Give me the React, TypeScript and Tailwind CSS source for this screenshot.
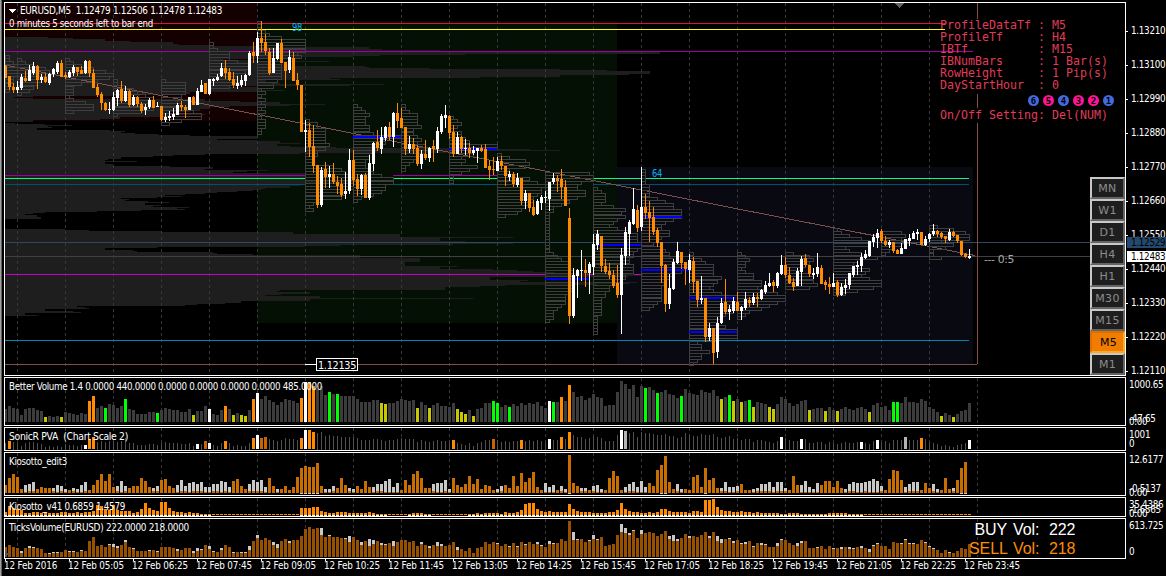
import { ReactNode } from 'react';
import clsx from 'clsx';

const ORANGE = '#ff8c00';
const WHITE = '#ffffff';
const GREEN = '#00ff00';
const YELLOW = '#c8c800';
const FONT = "'DejaVu Sans Condensed', 'DejaVu Sans', sans-serif";

const nums = (s: string) => s.trim().split(/[\s,]+/).map(Number);
const barX = (i: number) => 5 + i * 4;

// open high low close, four numbers for each bar, in chart pixels
const CANDLES = nums(`
66 65 78 78, 76 76 90 87, 87 83 93 90, 90 81 93 87, 88 74 90 77, 78 71 82 81, 81 65 81 70, 73 62 75 66,
66 65 89 80, 80 74 83 77, 77 73 83 82, 83 73 85 74, 74 68 77 69, 72 61 74 63, 63 60 77 77, 75 72 79 77,
77 70 78 72, 73 65 76 67, 67 67 76 72, 70 66 74 74, 73 60 74 61, 61 60 77 73, 73 69 88 88, 87 84 97 95,
94 92 110 103, 103 102 111 110, 110 102 114 109, 110 92 111 97, 98 89 106 90, 89 81 103 101, 101 86 102 91, 91 90 107 105,
105 95 106 97, 97 96 107 104, 104 102 113 111, 110 104 115 107, 107 98 109 100, 100 96 108 108, 107 102 107 106, 106 106 121 120,
120 113 122 117, 118 111 121 116, 117 108 120 114, 115 103 115 105, 105 101 111 107, 107 105 118 110, 110 97 110 97, 97 96 105 105,
105 88 105 91, 92 80 92 85, 83 83 94 94, 94 79 95 79, 81 78 86 79, 80 74 81 77, 76 63 77 68, 68 60 79 73,
72 68 81 80, 79 72 88 85, 86 76 89 83, 85 75 87 80, 81 74 86 75, 75 51 76 53, 52 42 63 56, 56 32 63 38,
38 21 52 43, 42 34 55 51, 52 48 75 73, 73 48 73 58, 59 43 60 43, 43 39 63 63, 62 62 88 71, 70 50 73 57,
58 52 81 81, 80 73 90 85, 85 85 132 132, 132 120 152 130, 130 123 157 147, 146 125 173 166, 165 165 208 205, 205 167 207 170,
169 162 188 177, 177 166 188 174, 174 163 184 182, 182 176 194 186, 184 178 197 195, 194 172 199 191, 191 149 194 160, 160 150 186 180,
179 174 196 189, 189 174 195 175, 175 173 198 198, 198 155 200 163, 164 142 171 143, 142 130 151 148, 149 127 154 137, 138 126 141 127,
127 122 140 137, 137 112 147 113, 113 103 128 121, 118 108 128 128, 127 127 155 149, 149 136 153 144, 144 138 154 149, 148 145 166 164,
164 150 169 154, 154 140 160 158, 158 147 162 148, 146 140 162 149, 149 127 153 131, 132 114 134 116, 118 105 128 115, 116 115 139 133,
132 125 157 154, 154 132 154 137, 137 136 153 149, 149 139 155 148, 148 143 158 153, 153 146 155 150, 151 148 163 148, 148 145 152 151,
149 144 168 168, 166 160 180 170, 169 157 175 170, 171 157 171 161, 161 156 170 166, 166 166 186 176, 177 171 181 174, 174 172 187 184,
185 173 187 178, 178 178 205 201, 201 190 209 193, 193 193 212 208, 207 200 216 215, 214 199 215 201, 203 195 210 197, 198 191 203 197,
199 182 211 182, 182 173 184 178, 178 175 192 181, 179 169 199 187, 187 180 206 206, 218 208 324 316, 316 268 318 275, 276 269 298 270,
271 250 281 270, 270 259 287 273, 273 262 294 264, 267 234 275 244, 245 230 250 234, 236 236 272 266, 266 259 274 272, 271 263 279 275,
275 270 288 286, 283 265 298 295, 295 248 334 255, 256 227 265 232, 234 220 256 222, 224 188 225 209, 210 205 232 228, 227 167 231 207,
207 194 219 213, 212 201 242 218, 217 207 235 232, 230 228 247 243, 242 242 283 266, 265 264 312 304, 304 274 309 288, 289 259 290 262,
263 242 264 251, 252 252 269 263, 262 262 285 269, 270 254 283 260, 261 257 293 282, 281 281 307 300, 300 276 304 298, 298 298 342 337,
337 323 341 328, 328 328 364 353, 352 317 358 323, 323 298 324 303, 302 279 314 312, 312 305 320 309, 311 297 313 301, 302 292 311 311,
311 306 320 307, 308 292 310 299, 300 297 307 303, 303 293 305 297, 297 293 307 299, 299 289 300 290, 292 281 294 285, 286 273 287 283,
282 280 292 286, 286 272 288 273, 274 255 275 265, 265 257 278 275, 275 267 284 283, 282 278 291 287, 286 268 286 271, 272 256 286 259,
258 254 267 265, 265 265 277 274, 275 268 279 273, 274 253 277 267, 268 265 284 284, 282 280 290 285, 284 277 294 287, 287 273 287 283,
282 280 297 295, 295 283 296 287, 288 279 294 285, 285 273 289 273, 275 266 277 266, 267 261 275 265, 266 253 272 257, 258 250 259 254,
256 241 257 241, 242 234 247 237, 238 229 248 233, 231 229 243 241, 241 236 246 245, 245 240 248 242, 242 242 253 251, 250 249 254 254,
254 243 254 248, 249 239 249 239, 241 234 246 238, 239 231 239 233, 234 229 240 232, 232 232 245 245, 245 236 246 239, 239 233 242 234,
234 224 236 231, 231 230 237 234, 233 232 239 237, 236 236 243 239, 240 229 241 232, 232 231 237 236, 235 235 243 241, 241 241 256 255,
254 253 258 257, 258 249 259 256`);

const VOLUME = nums(`
13 16 14 13 7 13 14 14 12 11 5 6 5 6 5 10 9 8 7 9 8 21 26 14 16 14 18 17 14 16
23 13 12 8 8 8 10 10 9 12 14 13 12 12 10 10 13 7 11 11 16 13 8 7 12 16 13 7 9 7
6 12 23 29 23 26 22 20 17 20 23 22 21 19 24 40 40 36 33 36 27 30 28 28 26 26 26 26 23 20
20 20 22 22 19 18 19 19 21 23 22 21 22 14 20 17 14 17 19 16 16 15 19 13 10 8 12 6 13 14
19 19 21 19 15 17 15 18 16 19 17 19 18 20 16 14 21 20 20 25 21 37 30 25 26 22 24 28 25 24
16 17 17 30 41 38 33 37 25 36 34 35 32 29 30 32 28 27 24 26 33 29 28 27 32 30 29 32 26 23
25 27 21 23 20 21 22 15 20 19 18 15 13 18 25 23 19 16 18 21 22 12 13 14 14 11 15 12 11 13
15 13 12 14 15 13 10 17 19 15 16 12 20 20 19 25 20 20 19 23 21 15 13 10 6 9 7 5 8 11
12 19`);

const VOLUME_COLORS: [string, number[]][] = [
  [ORANGE, [21, 22, 55, 62, 74, 76, 77, 139, 141]],
  [WHITE, [51, 63, 75, 136]],
  [GREEN, [25, 30, 38, 81, 83, 122, 123, 126, 137, 160, 163, 169, 181, 186, 222, 223]],
  [
    YELLOW,
    [
      10, 14, 47, 57, 59, 60, 94, 95, 103, 106, 113, 114, 115, 117, 179, 182,
      184, 187, 191, 192, 201, 205, 208, 216, 234, 237,
    ],
  ],
];

const PVA_COLORS: [string, number[]][] = [
  [ORANGE, [1, 21, 22, 55, 62, 74, 76, 77, 112, 129, 139, 141, 229]],
  [WHITE, [20, 48, 51, 63, 75, 136, 154, 194, 199, 214, 218, 241]],
  ['#c86400', [50, 64, 65, 122]],
  ['#b4b4b4', [155, 225]],
];

// below zero: drawn grey
const KIOSOTTO = nums(`
8 15 19 16 4 -8 -9 -11 4 6 5 5 -5 -8 -7 -4 3 -5 -4 -8 -11 3 8 13 19 12 19 6 -7 -12
-7 5 7 7 15 12 6 -5 -7 13 14 7 5 -8 -13 -7 -10 -11 -9 -11 -6 -6 -9 -9 -12 -11 -6 12 14 7
4 -9 -13 -11 -13 -6 15 7 -4 4 7 3 6 16 25 27 26 26 30 7 -4 -4 -7 5 15 8 -5 -4 7 4
12 6 -6 -9 -9 -12 -14 -6 -10 3 13 8 19 22 15 5 5 -9 -10 -10 -13 -4 15 8 6 9 17 9 14 4
8 7 3 -4 -7 8 5 17 7 20 11 15 21 6 3 -10 -6 -8 3 -7 -4 38 10 7 -5 -5 3 -7 -8 -4
3 15 22 17 3 -6 -9 -11 -6 -12 -6 10 7 23 28 37 11 4 -9 -4 4 3 16 18 6 25 13 15 5 -5
-11 -6 -6 -7 9 3 3 -4 -5 -9 -9 -11 -6 -11 -11 -5 3 17 8 -8 -12 -6 -4 -10 8 12 12 6 12 5
-4 -9 -11 -10 -10 -11 -12 -14 -12 -7 3 14 23 22 13 -6 -9 -11 -11 3 10 5 -9 -4 3 15 4 -5 13 25
31 0`);

// 0 leaves only the thin dash
const KIOSOTTO_V41 = nums(`
3 9 7 6 5 2 2 3 3 2 3 2 2 2 3 3 2 2 3 2 3 3 4 10 9 6 5 10 5 4
4 4 2 3 6 12 7 5 4 13 13 7 4 3 3 2 3 2 2 1 1 1 0 0 0 0 0 0 0 0
0 0 0 0 0 0 0 0 0 0 0 0 0 0 7 7 7 8 8 4 3 2 2 3 3 3 2 2 2 2
2 3 2 1 1 1 0 0 0 0 0 1 2 2 2 1 1 0 0 0 0 0 0 0 0 0 1 1 2 1
2 2 2 2 1 3 2 2 3 5 11 12 12 6 4 3 4 3 3 3 3 11 6 4 3 3 3 2 2 2
2 3 3 5 12 6 4 3 3 2 2 3 2 3 6 6 4 3 3 3 3 2 4 4 3 15 15 16 8 5
4 4 3 3 4 3 3 2 3 2 2 2 2 2 1 1 2 2 2 1 1 1 1 1 1 1 2 2 2 2
2 1 1 1 1 0 0 0 0 0 0 0 0 0 0 0 0 0 0 0 0 0 0 0 0 0 0 0 0 0
0 0`);

// total.cap
const TICKS = `
10 12 10 9 6.2 9 11.2 10.1 9 8 4 4.1 5.1 5.1 5 7 6.1 6.1 5 7.1 6 16 20 11 12 10 13.1 13.3 11.2 12
17.2 10 9.1 6 6 6 7.1 7 6.1 10 10 10 9 8.2 7 9 9 6.2 9.3 8.1 12 11.3 6.1 5 9.2 12 10 5.1 5 5.1
5.1 11.4 16 22.3 17 19 17 15.3 13.4 16 18 16.2 17 17 21 28 30 28 29 29.7 20 22.1 20 20 19 19.1 21.6 20 17 15.3
16 18.7 17.4 16 14.2 13.1 14 16.5 15 17 17 15 16 11 15.2 12 11.2 12 15.4 13.2 11 12 15 10.3 8 6 9 4 9 10
15 13 15 14.1 11 13 11.1 14 11.1 15 13.1 15 13 15.2 12.1 10 16.3 14.1 14 18 16 36 25.8 18.1 18 15 17.1 22.4 18.1 20
11 12 13 22 33.8 29.5 24.2 27.1 19 27.4 24 25 24 21 23 26 21.3 22.6 18.2 19 23 21.2 21 20 22 25 21.2 25 21.5 18.4
18 19.1 16.2 17 14.1 15.2 16 11.1 14 14.2 13.1 10 10 14.3 18.1 17 14 12 14.3 16.2 16 9 9 10.1 11 8 11 9.1 9 10.2
10 10.2 9.1 10 11.2 9 8.3 12.1 14.1 11 11 8 15 14 14.1 18.1 14.1 14.1 13 17 15.1 11.1 9.1 7 4 7 5.1 4 6 9
8 13`
  .trim()
  .split(/\s+/)
  .map((t) => t.split('.').map(Number));

// hourly profiles: x, top, row widths
const PROFILES: [number, number, string][] = [
  [5, 55, '4 4 8 12 12 12 12 8 8 8 4 4'],
  [17, 58, '4 8 16 28 32 32 32 24 20 16 12 4'],
  [65, 58, '4 8 16 28 40 48 44 32 16 8 8 8 4 8 20 28 28 8'],
  [113, 79, '4 4 12 20 24 32 40 36 32 40 28 4'],
  [161, 79, '4 24 24 24 24 20 20 16 20 28 32 40 40 20 8'],
  [209, 42, '4 4 8 20 20 20 28 40 40 36 28 24 28 32 20'],
  [257, 21, '4 4 4 8 12 24 48 48 48 48 40 44 20 24 24 24 24 24 24 20 16 16 4 8 4 8 4 8 4 8 4 4 8 8 8 4 4'],
  [305, 119, '4 12 12 20 20 20 20 20 24 20 12 12 8 8 8 28 36 40 44 48 48 48 48 40 40 36 16 8 4 8'],
  [353, 104, '4 8 12 16 12 12 12 16 16 20 48 32 32 28 24 20 16 16 12 12 12 16 20 28 40 40 32 32 28 20 8 4'],
  [401, 104, '4 4 8 16 16 16 16 20 12 12 16 20 16 24 28 24 20 16 12 8 4 4'],
  [449, 116, '4 8 12 8 4 12 12 16 20 48 32 24 24 12 16 12 28 20 12 4 4 4'],
  [497, 153, '4 12 28 32 28 12 12 20 32 40 48 44 44 40 36 36 32 28 24 20 8'],
  [545, 172, '44 48 48 36 32 32 40 40 32 24 16 8 8 4 4 4 4 4 4 4 4 4 4 4 4 4 8 12 16 24 24 24 28 28 28 28 28 28 28 24 20 20 20 16 12 8 8 8 4'],
  [593, 187, '4 8 12 12 12 8 20 32 28 32 24 20 16 24 36 44 44 44 48 48 44 40 40 36 36 40 40 40 32 32 28 24 16 16 12 12 8 8 8 8 8 8 4 4 4 4 4 4'],
  [641, 169, '4 4 4 4 4 8 8 8 8 16 24 32 32 40 40 40 32 24 20 20 28 28 20 16 12 20 24 28 28 32 40 48 48 40 32 28 24 24 20 20 20 20 20 16 12 8'],
  [689, 252, '4 4 12 16 24 24 24 24 32 28 24 20 24 32 48 48 48 44 48 44 36 32 28 28 36 48 48 48 28 8 12 12 20 12 12 8 4'],
  [737, 252, '4 8 12 8 8 4 8 16 16 24 24 20 28 40 48 48 40 32 24 12 8 4'],
  [785, 252, '8 24 28 24 20 16 16 24 28 28 32 24'],
  [833, 228, '4 8 16 28 36 36 12 16 28 44 24 20 24 36 32 28 36 48 48 40 24 12'],
  [881, 231, '20 24 20 28 20 12 8 4'],
  [929, 225, '8 24 36 40 40 12 24 16 4 4 12'],
];

// composite profile: y and the right edge from that y on
const SILHOUETTE = nums(`
37 48, 38 73, 39 105, 41 130, 42 173, 44 178, 45 213, 46 257, 47 369, 49 382, 50 440, 51 540, 52 660, 54 465, 55 380,
56 353, 57 300, 59 223, 60 257, 61 329, 62 270, 64 290, 66 365, 67 369, 68 430, 69 560, 70 607, 71 650, 74 629, 75 560,
77 480, 78 330, 79 340, 80 266, 83 280, 84 384, 85 350, 86 230, 87 257, 88 262, 90 284, 91 260, 92 190, 94 160, 95 140,
96 33, 97 14, 98 33, 99 205, 101 240, 102 280, 104 325, 105 290, 106 230, 107 210, 109 200, 111 190, 112 170, 114 205, 115 170,
117 120, 119 100, 120 33, 122 5, 123 15, 124 45, 125 72, 126 48, 127 52, 128 37, 130 110, 131 125, 132 121, 133 135,
134 158, 135 190, 136 257, 139 217, 140 257, 141 280, 143 300, 144 277, 146 290, 147 336, 148 460, 149 530, 150 560, 151 460,
153 300, 154 205, 155 173, 156 153, 157 121, 159 108, 160 105, 161 137, 162 105, 164 113, 166 170, 167 213, 169 205,
170 268, 171 247, 172 233, 173 305, 181 353, 184 300, 186 290, 188 265, 189 261, 190 253, 191 237, 192 217, 193 205,
194 185, 195 165, 196 181, 197 157, 198 121, 199 129, 200 125, 201 148, 202 169, 203 145, 205 161, 206 153, 207 189,
208 177, 209 185, 210 141, 211 97, 212 45, 213 33, 214 25, 215 37, 217 41, 219 5, 229 65, 230 89, 231 162, 232 293,
234 400, 237 513, 238 440, 241 465, 243 513, 244 453, 245 340, 246 305, 247 157, 248 105, 250 133, 251 137, 252 213,
253 217, 254 253, 255 360, 258 420, 262 405, 266 457, 267 440, 269 493, 270 517, 271 533, 272 555, 273 627, 274 643,
276 628, 277 490, 280 528, 281 520, 282 637, 283 629, 284 597, 285 505, 286 480, 287 445, 290 280, 291 277, 292 310,
294 281, 295 265, 296 320, 298 473, 299 310, 301 241, 303 225, 304 197, 305 185, 306 77, 307 85, 308 89, 309 45,
311 73, 312 81, 313 25, 315 37, 316 5`);

const TIMES = [
  '2016', '05:05', '06:25', '07:45', '09:05', '10:25', '11:45', '13:05',
  '14:25', '15:45', '17:05', '18:25', '19:45', '21:05', '22:25', '23:45',
];

const PRICES = [
  '1.13210', '1.13100', '1.12990', '1.12880', '1.12770', '1.12660',
  '1.12550', '1.12440', '1.12330', '1.12220', '1.12110',
];

const SETTINGS = [
  ['ProfileDataTf', 'M5'],
  ['ProfileTf', 'H4'],
  ['IBTf', 'M15'],
  ['IBNumBars', '1 Bar(s)'],
  ['RowHeight', '1 Pip(s)'],
  ['DayStartHour', '0'],
];

const TIMEFRAMES = ['MN', 'W1', 'D1', 'H4', 'H1', 'M30', 'M15', 'M5', 'M1'];

// color, y, then x ranges
const LEVELS: [string, number, number[][]][] = [
  ['#dc143c', 23, [[5, 945]]],
  ['#ffff00', 29, [[5, 945]]],
  ['#a000a0', 51, [[5, 209], [230, 973]]],
  ['#a000a0', 175, [[5, 305], [393, 497]]],
  ['#00ff7f', 178, [[5, 305], [394, 497], [593, 641], [646, 969]]],
  ['#005070', 184, [[5, 305], [386, 497], [593, 641], [649, 969]]],
  ['#2a4a68', 242, [[5, 1125]]],
  ['#404040', 256, [[5, 1125]]],
  ['#c800c8', 274, [[5, 545], [587, 593], [634, 641]]],
  ['#0082b4', 340, [[5, 969]]],
  ['#804c4c', 364, [[5, 305], [358, 977]]],
  ['#ffffff', 364, [[305, 316]]],
];

const POCS = [
  [353, 136, 48], [449, 148, 48], [545, 278, 44], [597, 244, 44],
  [641, 216, 41], [641, 269, 48], [689, 297, 48], [689, 331, 48],
];

function colorOf(map: [string, number[]][], i: number) {
  const hit = map.find(([, list]) => list.includes(i));
  return hit ? hit[0] : null;
}

function Grid({ top, bottom, last = 20 }: { top: number; bottom: number; last?: number }) {
  return (
    <g stroke="#373737" strokeDasharray="3 3">
      {Array.from({ length: last + 1 }, (_, k) => (
        <line key={k} x1={17.5 + k * 48} x2={17.5 + k * 48} y1={top} y2={bottom} />
      ))}
    </g>
  );
}

function Label({ x, y, w, children, fill = WHITE, size = 9.8 }: {
  x: number;
  y: number;
  w: number;
  children: string;
  fill?: string;
  size?: number;
}) {
  return (
    <text
      x={x}
      y={y}
      fill={fill}
      fontSize={size}
      fontFamily={FONT}
      textLength={w}
      lengthAdjust="spacingAndGlyphs"
      style={{ whiteSpace: 'pre' }}
    >
      {children}
    </text>
  );
}

function Pane({ top, height, className, axis, children, overlay }: {
  top: number;
  height: number;
  className: string;
  axis: ReactNode;
  children: ReactNode;
  overlay?: ReactNode;
}) {
  return (
    <div className={clsx('flex shrink-0', className)}>
      <div className="relative w-[1122px] shrink-0 border border-white">
        <svg
          className="block"
          width={1120}
          height={height - 2}
          viewBox={`5 ${top + 1} 1120 ${height - 2}`}
          shapeRendering="crispEdges"
        >
          {children}
        </svg>
        {overlay}
      </div>
      <div className="relative w-[40px] shrink-0">{axis}</div>
    </div>
  );
}

function AxisText({ className, children }: { className?: string; children: string }) {
  return (
    <span className={clsx('absolute left-[3px] leading-[10px] whitespace-nowrap', className)}>
      {children}
    </span>
  );
}

function PriceChart() {
  const rows = [];
  for (let k = 0; k < SILHOUETTE.length - 2; k += 2) {
    const y = SILHOUETTE[k];
    rows.push(`M5 ${y}H${SILHOUETTE[k + 1]}V${SILHOUETTE[k + 2]}H5Z`);
  }
  return (
    <>
      <rect x={5} y={3} width={252} height={118} fill="#140000" />
      <rect x={257} y={21} width={360} height={302} fill="#051005" />
      <rect x={617} y={167} width={356} height={197} fill="#090912" />
      <path d={rows.join('')} fill="#1e1e1e" />
      <Grid top={3} bottom={375} last={19} />
      {LEVELS.map(([color, y, ranges]) =>
        ranges.map(([x1, x2]) => (
          <rect key={`${y}-${x1}`} x={x1} y={y} width={x2 - x1} height={1} fill={color} />
        )),
      )}
      <path d="M977.5 3V19M977.5 94V108M977.5 123V364" stroke="#804c4c" />
      <line x1={5} y1={65} x2={975} y2={255.5} stroke="#7d5050" />
      {PROFILES.map(([x, top, widths]) => (
        <path
          key={x}
          fill="none"
          stroke="#3e3e3e"
          d={nums(widths)
            .map((w, r) => {
              const y = Math.round(top + r * 3.06) + 0.5;
              return `M${x + 0.5} ${y}h${w}v3h${-w}z`;
            })
            .join('')}
        />
      ))}
      {POCS.map(([x, y, w]) => (
        <rect key={`${x}-${y}`} x={x} y={y} width={w} height={2} fill="#0000ff" />
      ))}
      {Array.from({ length: CANDLES.length / 4 }, (_, i) => {
        const [o, h, l, c] = CANDLES.slice(i * 4, i * 4 + 4);
        const x = barX(i);
        return (
          <g key={i} fill={c < o ? WHITE : ORANGE}>
            <rect x={x} y={h} width={1} height={l - h} />
            <rect x={x - 1} y={Math.min(o, c)} width={3} height={Math.max(1, Math.abs(o - c))} />
          </g>
        );
      })}
      <path d="M8 9h8l-4 4z" fill={WHITE} />
      <path d="M894 3h11l-5.500 5z" fill="#606060" />
      <Label x={20} y={14} w={202}>{'EURUSD,M5  1.12479 1.12506 1.12478 1.12483'}</Label>
      <Label x={9} y={27} w={144}>0 minutes 5 seconds left to bar end</Label>
      <Label x={292} y={31} w={10} fill="#00b4ff">98</Label>
      <Label x={652} y={177} w={10} fill="#00b4ff">64</Label>
      <Label x={984} y={263} w={30} fill="#a8a8a8">--- 0:5</Label>
      <rect x={316.5} y={358.5} width={41} height={12} fill="#000" stroke="#fff" />
      <Label x={318} y={369} w={38} size={10.5}>1.12135</Label>
    </>
  );
}

function Settings() {
  return (
    <div className="absolute left-[935px] top-[16px] font-['DejaVu_Sans_Mono',monospace] text-[11.6px] leading-[12px] tracking-[0.02px] text-[#e03c5a]">
      {SETTINGS.map(([name, value]) => (
        <div key={name} className="flex">
          <span className="w-[98px]">{name}</span>
          <span className="w-[14px]">:</span>
          <span className="whitespace-nowrap">{value}</span>
        </div>
      ))}
      <div className="flex gap-[4px] pl-[88px] pt-[4px] tracking-normal">
        {[6, 5, 4, 3, 2, 1].map((n) => (
          <span
            key={n}
            className={clsx(
              'flex h-[11px] w-[11px] items-center justify-center rounded-full text-[9px] font-bold text-black',
              n === 6 || n === 4 || n === 1 ? 'bg-[#4169e1]' : 'bg-[#ff1493]',
            )}
          >
            {n}
          </span>
        ))}
      </div>
      <div className="pt-[3px] whitespace-pre">On/Off Setting: Del(NUM)</div>
    </div>
  );
}

function TimeframeButtons() {
  return (
    <div className="absolute bottom-0 right-0 flex w-[35px] flex-col font-['DejaVu_Sans',sans-serif] text-[11px] tracking-[0.3px]">
      {TIMEFRAMES.map((tf) => (
        <button
          key={tf}
          className={clsx(
            'flex h-[22px] items-center justify-center border-2',
            tf === 'M5'
              ? 'border-t-[#dc7000] border-l-[#dc7000] border-r-[#ffa820] border-b-[#ffa820] bg-[#f07c00] pt-[3px] pl-[2px] text-black'
              : 'border-t-[#c8c8c8] border-l-[#c8c8c8] border-r-[#646464] border-b-[#646464] bg-[#1e1e1e] pt-[2px] text-[#8c8c8c]',
          )}
        >
          {tf}
        </button>
      ))}
    </div>
  );
}

export default function App() {
  return (
    <div className="flex h-[576px] w-[1166px] overflow-hidden bg-black text-white">
      <div className="w-[2px] shrink-0 border-l border-[#a0a0a0] bg-[#606060]" />
      <div className="ml-[2px] flex flex-col gap-px pt-[2px] font-['DejaVu_Sans_Condensed','DejaVu_Sans',sans-serif] text-[9.8px] tracking-[-0.3px]">
        <Pane
          top={2}
          height={374}
          className="h-[374px]"
          overlay={
            <>
              <Settings />
              <TimeframeButtons />
            </>
          }
          axis={
            <>
              <div className="flex flex-col pt-[12px]">
                {PRICES.map((p) => (
                  <div key={p} className="flex h-[34px] shrink-0 items-center gap-[3px]">
                    <span className="h-px w-[2px] bg-white" />
                    {p}
                  </div>
                ))}
              </div>
              <div className="absolute left-[1px] top-[235px] h-[11px] w-[39px] bg-[#234a6e] pl-[4px] leading-[11px] text-black">
                1.12529
              </div>
              <div className="absolute left-[1px] top-[249px] h-[11px] w-[39px] bg-white pl-[4px] leading-[11px] text-black">
                1.12483
              </div>
            </>
          }
        >
          <PriceChart />
        </Pane>

        <Pane
          top={377}
          height={49}
          className="h-[49px]"
          axis={
            <>
              <AxisText className="top-[3px]">1000.65</AxisText>
              <AxisText className="top-[37px]">-47.65</AxisText>
              <AxisText className="top-[40px]">0.00</AxisText>
            </>
          }
        >
          <Grid top={378} bottom={423} />
          {VOLUME.map((v, i) => (
            <rect key={i} x={barX(i) - 1} y={422 - v} width={3} height={v} fill={colorOf(VOLUME_COLORS, i) ?? '#3c3c3c'} />
          ))}
          <Label x={9} y={390} w={313}>
            Better Volume 1.4 0.0000 440.0000 0.0000 0.0000 0.0000 0.0000 485.0000
          </Label>
        </Pane>

        <Pane
          top={427}
          height={24}
          className="h-[24px]"
          axis={
            <>
              <AxisText className="top-[3px]">1001</AxisText>
              <AxisText className="top-[12px]">0</AxisText>
            </>
          }
        >
          <Grid top={428} bottom={450} />
          {VOLUME.map((v, i) => {
            const color = colorOf(PVA_COLORS, i);
            const h = Math.round(v * 0.47);
            return color ? (
              <rect key={i} x={barX(i) - 1} y={449 - h} width={3} height={h} fill={color} />
            ) : (
              <rect key={i} x={barX(i)} y={449 - h} width={1} height={h + 1} fill="#505050" />
            );
          })}
          <Label x={9} y={440} w={119}>{'SonicR PVA  (Chart Scale 2)'}</Label>
        </Pane>

        <Pane
          top={452}
          height={44}
          className="h-[44px]"
          axis={
            <>
              <AxisText className="top-[3px]">12.6177</AxisText>
              <AxisText className="top-[32px]">-0.5137</AxisText>
              <AxisText className="top-[36px]">0.00</AxisText>
            </>
          }
        >
          <Grid top={453} bottom={494} />
          {KIOSOTTO.map((v, i) => (
            <g key={i}>
              {v < 0 && <rect x={barX(i) - 1} y={493 + v} width={3} height={-v} fill="#c8c8c8" />}
              {v !== 0 && (
                <rect
                  x={barX(i) - 1}
                  y={493 - (v > 0 ? v : 1 + (-v % 2))}
                  width={3}
                  height={v > 0 ? v : 1 + (-v % 2)}
                  fill="#c86e00"
                />
              )}
              {v >= 25 && <rect x={barX(i) - 1} y={493} width={3} height={1} fill="#c8c8c8" />}
            </g>
          ))}
          <Label x={9} y={465} w={58}>Kiosotto_edit3</Label>
        </Pane>

        <Pane
          top={497}
          height={20}
          className="h-[20px]"
          axis={
            <>
              <AxisText className="top-[3px]">35.4386</AxisText>
              <AxisText className="top-[8px]">-1.6565</AxisText>
              <AxisText className="top-[12px]">0.00</AxisText>
            </>
          }
        >
          <Grid top={498} bottom={513} />
          {KIOSOTTO_V41.map((v, i) => (
            <g key={i}>
              <rect x={barX(i) - 1} y={515 - Math.max(v, 1)} width={3} height={Math.max(v, 1)} fill={ORANGE} />
              {v > 0 && <rect x={barX(i) - 1} y={515} width={3} height={1} fill={WHITE} />}
            </g>
          ))}
          <Label x={9} y={510} w={116}>Kiosotto_v41 0.6859 1.4579</Label>
        </Pane>

        <Pane
          top={518}
          height={41}
          className="h-[41px]"
          overlay={
            <div className="absolute left-[965px] top-[1px] grid grid-cols-[39px_36px_27px] font-['Liberation_Sans',sans-serif] text-[16px] leading-[19px] tracking-[-0.1px] gap-x-[2px]">
              <span className="text-right pr-[2px]">BUY</span>
              <span className="pl-[2px]">Vol:</span>
              <span>222</span>
              <span className="text-[#ff8c00] -ml-px">SELL</span>
              <span className="pl-[2px] text-[#ff8c00]">Vol:</span>
              <span className="text-[#ff8c00]">218</span>
            </div>
          }
          axis={
            <>
              <AxisText className="top-[3px]">613.725</AxisText>
              <AxisText className="top-[29px]">0</AxisText>
            </>
          }
        >
          <Grid top={519} bottom={557} />
          {TICKS.map(([total, cap = 0], i) => (
            <g key={i}>
              <rect x={barX(i) - 1} y={557 - total} width={3} height={total} fill="#965000" />
              <rect x={barX(i) - 1} y={557 - total} width={3} height={cap} fill="#c8c8c8" />
            </g>
          ))}
          <path d="M5 551l5 3-5 3z" fill="#505050" />
          <Label x={9} y={531} w={180}>TicksVolume(EURUSD) 222.0000 218.0000</Label>
        </Pane>

        <div className="-mt-px flex tracking-[-0.15px]">
          {TIMES.map((t) => (
            <div key={t} className="flex w-[64px] shrink-0 flex-col whitespace-nowrap leading-[10px]">
              <span className="ml-[1px] h-[2px] w-px bg-white" />
              12 Feb {t}
            </div>
          ))}
        </div>
      </div>
    </div>
  );
}
